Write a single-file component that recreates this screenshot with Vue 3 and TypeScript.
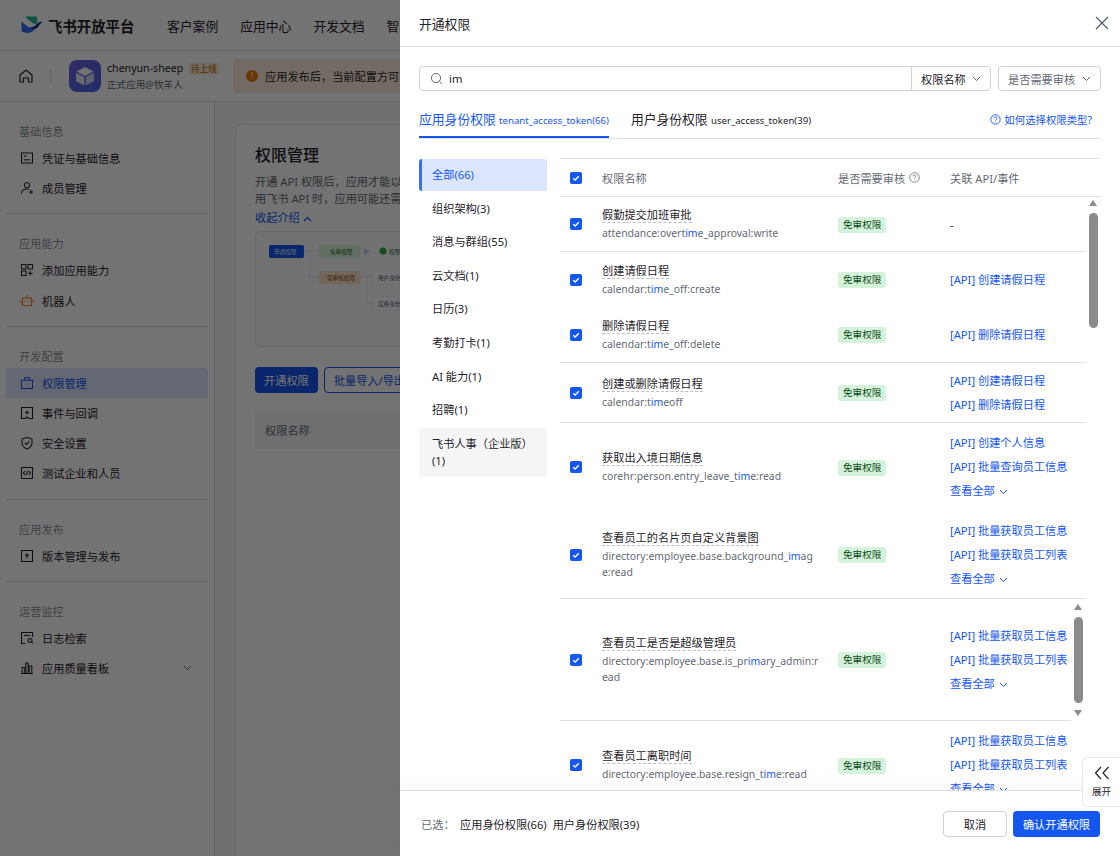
<template>
  <div class="page">
    <header class="topbar">
      <div class="logo">
        <svg width="22" height="18" viewBox="0 0 22 18">
          <path d="M4 0.5H15.5C16.5 3 16.8 5.5 15 8.5C12 7 7.5 4.5 4 0.5Z" fill="#19b6a3" />
          <path d="M0.5 5.5C4 9 8.5 12.5 14 13.5C11 16.5 7 17.5 4 16.5C2 16 1 15.5 0.5 15Z" fill="#2f6bf2" />
          <path d="M8 11C11 12 14 10.5 16 8C17.5 6.3 19.5 5.5 21.5 6C19.5 7 18.5 9 17 11C15 13.5 11.5 13.5 8 11Z" fill="#0e2f8f" />
        </svg>
        <span>飞书开放平台</span>
      </div>
      <nav class="topnav">
        <span v-for="n in navItems" :key="n">{{ n }}</span>
      </nav>
    </header>

    <div class="appbar">
      <svg class="home" width="16" height="16" viewBox="0 0 16 16" fill="none" stroke="#1f2329" stroke-width="1.2">
        <path d="M2 7L8 2L14 7V14H10.5V10H5.5V14H2Z" stroke-linejoin="round" />
      </svg>
      <i class="appbar-sep"></i>
      <div class="app-icon">
        <svg width="22" height="22" viewBox="0 0 22 22">
          <path d="M11 2L19.5 6.5L11 11L2.5 6.5Z" fill="#ffffff" />
          <path d="M2 7.7L10.3 12V20.5L2 16.2Z" fill="#e6e9fb" />
          <path d="M20 7.7L11.7 12V20.5L20 16.2Z" fill="#cfd5f7" />
        </svg>
      </div>
      <div class="app-info">
        <div class="app-name">chenyun-sheep <em>待上线</em></div>
        <div class="app-org">正式应用@牧羊人</div>
      </div>
      <div class="notice">
        <i class="notice-dot">!</i>
        <span>应用发布后，当前配置方可生效，请及时创建版本并申请发布</span>
      </div>
    </div>

    <div class="main">
      <aside class="sidebar">
        <section v-for="(g, gi) in sideGroups" :key="g.title" class="side-group" :class="{ last: gi === sideGroups.length - 1 }">
          <div class="side-title">{{ g.title }}</div>
          <div v-for="it in g.items" :key="it.label" class="side-item" :class="{ active: it.active }">
            <svg width="14" height="14" viewBox="0 0 14 14" fill="none" :stroke="it.color || (it.active ? '#1456f0' : '#1f2329')" stroke-width="1.05">
              <path v-for="d in icons[it.icon]" :key="d" :d="d" />
            </svg>
            <span>{{ it.label }}</span>
            <svg v-if="it.more" class="side-caret" width="9" height="6" viewBox="0 0 9 6" fill="none" stroke="#646a73">
              <path d="M1 1L4.5 4.5L8 1" />
            </svg>
          </div>
        </section>
      </aside>

      <div class="content">
        <div class="card">
          <h2>权限管理</h2>
          <p>开通 API 权限后，应用才能以自身身份或用户身份调用相应的接口</p>
          <p>用飞书 API 时，应用可能还需要额外申请数据权限</p>
          <div class="collapse">收起介绍
            <svg width="9" height="6" viewBox="0 0 9 6" fill="none" stroke="#1456f0" stroke-width="1.2"><path d="M1 5L4.5 1.5L8 5" /></svg>
          </div>
          <div class="diagram">
            <svg width="400" height="116" viewBox="0 0 400 116" fill="none" font-size="5.6" font-family="'Noto Sans CJK SC', sans-serif">
              <path d="M47 19H63M54 19V45H63M104 45H117M111 45V71H117" stroke="#c8cbd0" stroke-width="0.7" stroke-dasharray="1.5 1" />
              <rect x="13" y="13" width="35" height="13" rx="2" fill="#1456f0" />
              <text x="18" y="22" fill="#dfe8ff">申通权限</text>
              <rect x="63" y="13" width="41" height="13" rx="2" fill="#d9f3d9" />
              <text x="74" y="22" fill="#2f6b2f">免审权限</text>
              <path d="M108 16L114 19.5L108 23Z" fill="#bcd0fb" />
              <circle cx="127" cy="19" r="3.5" fill="#32a645" />
              <text x="133" y="22" fill="#2f6b2f">权限</text>
              <rect x="63" y="39" width="41" height="13" rx="2" fill="#fde3cb" />
              <text x="71" y="48" fill="#8a4a10">需审核权限</text>
              <rect x="117" y="39" width="40" height="13" rx="2" fill="#fff" stroke="#dee0e3" stroke-dasharray="1.5 1" stroke-width="0.7" />
              <text x="122" y="48" fill="#4e5969">用户身份</text>
              <rect x="117" y="65" width="40" height="13" rx="2" fill="#fff" stroke="#dee0e3" stroke-dasharray="1.5 1" stroke-width="0.7" />
              <text x="122" y="74" fill="#4e5969">应用身份</text>
            </svg>
          </div>
          <div class="card-actions">
            <button class="btn-solid">开通权限</button>
            <button class="btn-line">批量导入/导出权限</button>
          </div>
          <div class="card-thead">权限名称</div>
        </div>
      </div>
    </div>

    <div class="mask"></div>

    <div class="drawer">
      <div class="drawer-head">
        <span>开通权限</span>
        <svg width="14" height="14" viewBox="0 0 14 14" fill="none" stroke="#4e5969" stroke-width="1.1"><path d="M1 1L13 13M13 1L1 13" /></svg>
      </div>

      <div class="drawer-body">
        <div class="filters">
          <div class="search">
            <svg width="13" height="13" viewBox="0 0 13 13" fill="none" stroke="#646a73" stroke-width="1">
              <circle cx="6" cy="6" r="4.6" /><path d="M9.5 9.5L11.8 11.8" />
            </svg>
            <span class="search-text">im</span>
            <div class="search-type">权限名称
              <svg width="9" height="6" viewBox="0 0 9 6" fill="none" stroke="#646a73"><path d="M1 1L4.5 4.5L8 1" /></svg>
            </div>
          </div>
          <div class="audit-select">是否需要审核
            <svg width="9" height="6" viewBox="0 0 9 6" fill="none" stroke="#646a73"><path d="M1 1L4.5 4.5L8 1" /></svg>
          </div>
        </div>

        <div class="tabs">
          <div class="tab on">应用身份权限 <small>tenant_access_token(66)</small></div>
          <div class="tab">用户身份权限 <small>user_access_token(39)</small></div>
          <div class="tab-help">
            <svg width="11" height="11" viewBox="0 0 11 11" fill="none" stroke="#1456f0" stroke-width="0.9">
              <circle cx="5.5" cy="5.5" r="4.7" /><path d="M4 4.3C4 2.4 7 2.4 7 4.2C7 5.3 5.5 5.3 5.5 6.6M5.5 7.6V8.4" />
            </svg>
            如何选择权限类型?
          </div>
        </div>

        <div class="columns">
          <div class="cats">
            <div v-for="(c, i) in categories" :key="c" class="cat" :class="{ on: i === 0, hover: i === categories.length - 1 }">{{ c }}</div>
          </div>

          <div class="table">
            <div class="thead grid">
              <span class="check"><svg width="12" height="12" viewBox="0 0 12 12" fill="none" stroke="#fff" stroke-width="1.4"><path d="M3.2 6.2L5.2 8L8.8 4.2" /></svg></span>
              <span>权限名称</span>
              <span class="thead-audit">是否需要审核
                <svg width="11" height="11" viewBox="0 0 11 11" fill="none" stroke="#646a73" stroke-width="0.8">
                  <circle cx="5.5" cy="5.5" r="4.8" /><path d="M4 4.3C4 2.4 7 2.4 7 4.2C7 5.3 5.5 5.3 5.5 6.6M5.5 7.6V8.4" />
                </svg>
              </span>
              <span>关联 API/事件</span>
            </div>

            <div class="tbody">
              <div
                v-for="r in rows"
                :key="r.title"
                class="row grid"
                :class="{ line: r.line, narrow: r.narrow }"
                :style="{ height: r.h + 'px' }"
              >
                <span class="check"><svg width="12" height="12" viewBox="0 0 12 12" fill="none" stroke="#fff" stroke-width="1.4"><path d="M3.2 6.2L5.2 8L8.8 4.2" /></svg></span>
                <div class="perm">
                  <div class="perm-title"><span>{{ r.title }}</span></div>
                  <div class="perm-scope">{{ r.scope[0] }}<b>im</b>{{ r.scope[1] }}</div>
                </div>
                <div><span class="tag">免审权限</span></div>
                <div class="apis">
                  <template v-if="r.apis.length">
                    <a v-for="a in r.apis" :key="a">{{ a }}</a>
                    <a v-if="r.all" class="see-all">查看全部
                      <svg width="9" height="6" viewBox="0 0 9 6" fill="none" stroke="#1456f0"><path d="M1 1L4.5 4.5L8 1" /></svg>
                    </a>
                  </template>
                  <span v-else>-</span>
                </div>
              </div>

              <div class="bar bar-a"><i class="up"></i><i class="thumb"></i></div>
              <div class="bar bar-b"><i class="up"></i><i class="thumb"></i><i class="down"></i></div>
            </div>
          </div>
        </div>
      </div>

      <div class="drawer-foot">
        <span class="foot-label">已选：</span>
        <span class="foot-sel">应用身份权限(66)</span>
        <span class="foot-sel second">用户身份权限(39)</span>
        <button class="btn-cancel">取消</button>
        <button class="btn-ok">确认开通权限</button>
      </div>

      <div class="expand">
        <svg width="16" height="14" viewBox="0 0 16 14" fill="none" stroke="#1f2329" stroke-width="1.2"><path d="M7 1L1.5 7L7 13M14.5 1L9 7L14.5 13" /></svg>
        <span>展开</span>
      </div>
    </div>
  </div>
</template>

<script setup lang="ts">
interface SideItem {
  label: string;
  icon: string;
  active?: boolean;
  more?: boolean;
  color?: string;
}

interface PermRow {
  title: string;
  scope: [string, string];
  apis: string[];
  all?: boolean;
  line?: boolean;
  narrow?: boolean;
  h: number;
}

const navItems = ['客户案例', '应用中心', '开发文档', '智能助手'];

const icons: Record<string, string[]> = {
  card: ['M1.5 2H12.5V12H1.5Z', 'M3.8 5H6.5', 'M3.8 8.8H10.2'],
  member: ['M7 1.5A2.6 2.6 0 1 1 6.99 1.5', 'M1.5 12.5C1.5 9.5 3.8 8 7 8C8 8 8.8 8.1 9.4 8.4', 'M11 9V13M9 11H13'],
  blocks: ['M1.5 1.5H6V6H1.5Z', 'M8 1.5H12.5V6H8Z', 'M1.5 8H6V12.5H1.5Z', 'M10.2 8V12.5M8 10.2H12.5'],
  robot: ['M2.5 4H11.5V11.5H2.5Z', 'M7 1.5V4', 'M1 6.5V9M13 6.5V9', 'M5 7V8M9 7V8'],
  lock: ['M1.5 4.2H12.5V12.5H1.5Z', 'M4.8 4.2V1.5H9.2V4.2', 'M7 7.6V8.6'],
  event: ['M1.5 1.5H12.5V12.5H8.8L7 11L5.2 12.5H1.5Z', 'M7 4.4V8.4M5 6.4H9'],
  shield: ['M7 1.2L12 3V7C12 10 9.5 12 7 13C4.5 12 2 10 2 7V3Z', 'M4.8 6.8L6.5 8.4L9.3 5.4'],
  code: ['M1.5 1.5H12.5V12.5H1.5Z', 'M5 5.2L3.4 7L5 8.8M9 5.2L10.6 7L9 8.8M7.6 5L6.4 9'],
  upload: ['M1.5 1.5H12.5V12.5H1.5Z', 'M7 9.5V5M5 7L7 5L9 7'],
  log: ['M5.5 12.5H1.5V1.5H12.5V6', 'M3.8 4.4H10.2', 'M10 7.5A2 2 0 1 1 9.99 7.5', 'M11.4 10.9L13 12.5'],
  chart: ['M1 12.5H13', 'M2.2 12.5V6.5H4.8V12.5', 'M5.8 12.5V2H8.2V12.5', 'M9.2 12.5V5H11.8V12.5'],
};

const sideGroups: { title: string; items: SideItem[] }[] = [
  { title: '基础信息', items: [
    { label: '凭证与基础信息', icon: 'card' },
    { label: '成员管理', icon: 'member' },
  ] },
  { title: '应用能力', items: [
    { label: '添加应用能力', icon: 'blocks' },
    { label: '机器人', icon: 'robot', color: '#ed7b12' },
  ] },
  { title: '开发配置', items: [
    { label: '权限管理', icon: 'lock', active: true },
    { label: '事件与回调', icon: 'event' },
    { label: '安全设置', icon: 'shield' },
    { label: '测试企业和人员', icon: 'code' },
  ] },
  { title: '应用发布', items: [
    { label: '版本管理与发布', icon: 'upload' },
  ] },
  { title: '运营监控', items: [
    { label: '日志检索', icon: 'log' },
    { label: '应用质量看板', icon: 'chart', more: true },
  ] },
];

const categories = [
  '全部(66)',
  '组织架构(3)',
  '消息与群组(55)',
  '云文档(1)',
  '日历(3)',
  '考勤打卡(1)',
  'AI 能力(1)',
  '招聘(1)',
  '飞书人事（企业版）(1)',
];

const rows: PermRow[] = [
  { title: '假勤提交加班审批', scope: ['attendance:overt', 'e_approval:write'], apis: [], line: true, h: 55 },
  { title: '创建请假日程', scope: ['calendar:t', 'e_off:create'], apis: ['[API] 创建请假日程'], h: 55 },
  { title: '删除请假日程', scope: ['calendar:t', 'e_off:delete'], apis: ['[API] 删除请假日程'], line: true, h: 56 },
  { title: '创建或删除请假日程', scope: ['calendar:t', 'eoff'], apis: ['[API] 创建请假日程', '[API] 删除请假日程'], line: true, h: 60 },
  { title: '获取出入境日期信息', scope: ['corehr:person.entry_leave_t', 'e:read'], apis: ['[API] 创建个人信息', '[API] 批量查询员工信息'], all: true, h: 88 },
  { title: '查看员工的名片页自定义背景图', scope: ['directory:employee.base.background_', 'age:read'], apis: ['[API] 批量获取员工信息', '[API] 批量获取员工列表'], all: true, line: true, h: 88 },
  { title: '查看员工是否是超级管理员', scope: ['directory:employee.base.is_pr', 'ary_admin:read'], apis: ['[API] 批量获取员工信息', '[API] 批量获取员工列表'], all: true, line: true, narrow: true, h: 122 },
  { title: '查看员工离职时间', scope: ['directory:employee.base.resign_t', 'e:read'], apis: ['[API] 批量获取员工信息', '[API] 批量获取员工列表'], all: true, h: 88 },
];
</script>

<style>
html, body {
  margin: 0;
  overflow: hidden;
}
</style>

<style scoped>
.page {
  position: relative;
  width: 1120px;
  height: 856px;
  overflow: hidden;
  background: #fff;
  color: #1f2329;
  font-family: "Noto Sans", "Noto Sans CJK SC", sans-serif;
  font-size: 11.2px;
}

.topbar {
  height: 50px;
  display: flex;
  align-items: center;
  padding-left: 21px;
  border-bottom: 1px solid #dee0e3;
  box-sizing: content-box;
}
.logo {
  display: flex;
  align-items: center;
  gap: 5px;
  width: 146px;
  font-size: 14.4px;
  font-weight: 700;
}
.topnav {
  display: flex;
  gap: 22px;
  font-size: 12.8px;
}

.appbar {
  height: 50px;
  display: flex;
  align-items: center;
  padding-left: 18px;
  border-bottom: 1px solid #dee0e3;
}
.appbar-sep {
  width: 1px;
  height: 13px;
  margin: 0 18px 0 16px;
  background: #dee0e3;
}
.app-icon {
  width: 32px;
  height: 32px;
  border-radius: 8px;
  background: linear-gradient(135deg, #6f63e8, #4a62e0);
  display: flex;
  align-items: center;
  justify-content: center;
}
.app-info {
  margin-left: 6px;
  width: 126px;
}
.app-name {
  font-size: 10.6px;
  line-height: 16px;
  white-space: nowrap;
}
.app-name em {
  font-style: normal;
  font-size: 8.6px;
  padding: 0 2px;
  margin-left: 3px;
  color: #c2660a;
  background: #fde8d4;
  border-radius: 2px;
}
.app-org {
  font-size: 9.6px;
  line-height: 16px;
  color: #646a73;
}
.notice {
  height: 34px;
  flex: 1;
  display: flex;
  align-items: center;
  padding-left: 13px;
  white-space: nowrap;
  overflow: hidden;
  border-radius: 4px;
  background: #feeddb;
}
.notice-dot {
  width: 12px;
  height: 12px;
  margin-right: 7px;
  border-radius: 50%;
  background: #ed7b12;
  color: #fff;
  font-style: normal;
  font-size: 9px;
  line-height: 12px;
  text-align: center;
}

.main {
  display: flex;
  height: 755px;
}
.sidebar {
  width: 215px;
  padding: 0 6px;
  box-sizing: border-box;
  border-right: 1px solid #dee0e3;
  flex: none;
}
.side-group {
  margin: 0 0 0 0;
  padding: 19px 0 10px;
  border-bottom: 1px solid #dee0e3;
  box-shadow: none;
}
.side-group.last {
  border-bottom: 0;
}
.side-title {
  padding-left: 13px;
  line-height: 22px;
  color: #8f959e;
}
.side-item {
  height: 30.2px;
  display: flex;
  align-items: center;
  gap: 8px;
  padding: 0 6px 0 14px;
  border-radius: 3px;
}
.side-item.active {
  background: #dbe6fd;
  color: #1456f0;
}
.side-caret {
  margin-left: auto;
  margin-right: 10px;
}

.content {
  flex: 1;
  padding: 22px 0 0 20px;
  background: #f7f8fa;
}
.card {
  height: 760px;
  padding: 20px 19px;
  background: #fff;
  border: 1px solid #e4e5e7;
  border-radius: 6px 0 0 0;
  white-space: nowrap;
  overflow: hidden;
}
.card h2 {
  margin: 0;
  font-size: 16px;
  line-height: 20px;
  font-weight: 500;
}
.card p {
  margin: 0;
  color: #646a73;
  line-height: 17px;
}
.card h2 + p {
  margin-top: 8px;
}
.collapse {
  color: #1456f0;
  line-height: 22px;
}
.diagram {
  height: 116px;
  margin-top: 2px;
  border: 1px solid #e4e5e7;
  border-radius: 4px;
  background: #fafbfc;
  box-sizing: border-box;
}
.card-actions {
  display: flex;
  gap: 6px;
  margin-top: 20px;
}
.card-actions button {
  height: 26px;
  padding: 0 9px;
  font: inherit;
  border-radius: 4px;
  white-space: nowrap;
}
.btn-solid {
  background: #1456f0;
  color: #fff;
  border: 0;
}
.btn-line {
  background: #fff;
  color: #1456f0;
  border: 1px solid #1456f0;
}
.card-thead {
  height: 37px;
  margin-top: 19px;
  padding-left: 10px;
  line-height: 37px;
  background: #f5f6f7;
  color: #646a73;
}

.mask {
  position: absolute;
  inset: 0;
  background: rgba(0, 0, 0, 0.55);
}

.drawer {
  position: absolute;
  top: 0;
  left: 400px;
  width: 720px;
  height: 856px;
  display: flex;
  flex-direction: column;
  background: #fff;
}
.drawer-head {
  height: 46px;
  flex: none;
  display: flex;
  align-items: center;
  justify-content: space-between;
  padding: 0 11px 0 19px;
  font-size: 12.8px;
  border-bottom: 1px solid #dee0e3;
  box-sizing: content-box;
}
.drawer-body {
  flex: 1;
  min-height: 0;
  padding: 19px 19px 0;
  overflow: hidden;
}
.filters {
  display: flex;
  gap: 7px;
  height: 25px;
}
.search {
  width: 572px;
  display: flex;
  align-items: center;
  box-sizing: border-box;
  padding-left: 10px;
  border: 1px solid #d0d3d6;
  border-radius: 4px;
}
.search-text {
  margin-left: 6px;
  flex: 1;
}
.search-type {
  width: 79px;
  height: 100%;
  box-sizing: border-box;
  display: flex;
  align-items: center;
  gap: 6px;
  padding-left: 9px;
  border-left: 1px solid #d0d3d6;
}
.audit-select {
  width: 103px;
  box-sizing: border-box;
  display: flex;
  align-items: center;
  gap: 7px;
  padding-left: 9px;
  border: 1px solid #d0d3d6;
  border-radius: 4px;
  color: #646a73;
}
.tabs {
  height: 37px;
  margin-top: 10px;
  display: flex;
  gap: 22px;
  border-bottom: 1px solid #dee0e3;
  box-sizing: content-box;
}
.tab {
  height: 37px;
  line-height: 36px;
  font-size: 12.8px;
  white-space: nowrap;
  box-sizing: border-box;
}
.tab small {
  font-size: 9.6px;
}
.tab.on {
  color: #1456f0;
  border-bottom: 2px solid #1456f0;
}
.tab-help {
  margin-left: auto;
  margin-right: 9px;
  display: flex;
  align-items: center;
  gap: 3px;
  font-size: 10.4px;
  color: #1456f0;
}

.columns {
  display: flex;
  margin-top: 19px;
}
.cats {
  width: 128px;
  flex: none;
  padding-top: 1px;
}
.cat {
  min-height: 32px;
  margin-bottom: 1.6px;
  padding: 7px 13px;
  box-sizing: border-box;
  line-height: 17.6px;
  border-radius: 3px;
}
.cat.on {
  background: #dbe6fd;
  color: #1456f0;
  border-left: 3px solid #3370ff;
  padding-left: 10px;
}
.cat.hover {
  background: #f5f5f5;
}

.table {
  margin-left: 13px;
  width: 541px;
  border-top: 1px solid #dee0e3;
  flex: none;
}
.grid {
  display: grid;
  grid-template-columns: 42px 236px 112px 1fr;
  align-items: center;
}
.thead {
  height: 37px;
  color: #646a73;
  border-bottom: 1px solid #dee0e3;
  box-sizing: content-box;
}
.thead-audit {
  display: flex;
  align-items: center;
  gap: 4px;
}
.check {
  width: 12px;
  height: 12px;
  margin-left: 10px;
  display: block;
  background: #1456f0;
  border-radius: 2px;
}
.check svg {
  display: block;
}
.tbody {
  position: relative;
  height: 594px;
  overflow: hidden;
}
.row {
  box-sizing: border-box;
  margin-right: 15px;
}
.row.line {
  border-bottom: 1px solid #dee0e3;
}
.row.narrow {
  margin-right: 30px;
}
.perm {
  padding-right: 18px;
}
.perm-title {
  line-height: 16px;
}
.perm-title span {
  border-bottom: 1px dashed #bbbfc4;
}
.perm-scope {
  margin-top: 2px;
  line-height: 16px;
  font-size: 10.4px;
  color: #646a73;
  word-break: break-all;
}
.perm-scope b {
  font-weight: 400;
  color: #1456f0;
}
.tag {
  display: inline-block;
  padding: 0 5px;
  height: 16px;
  line-height: 16px;
  font-size: 9.6px;
  color: #0d4a1a;
  background: #d5f3da;
  border-radius: 3px;
}
.apis a {
  display: block;
  line-height: 17.6px;
  color: #1456f0;
}
.apis a + a {
  margin-top: 6.4px;
}
.see-all svg {
  margin-left: 1px;
}

.bar {
  position: absolute;
  width: 9px;
}
.bar i {
  display: block;
}
.bar-a {
  top: 3px;
  right: 3px;
}
.bar-b {
  top: 407px;
  right: 18px;
}
.bar .up,
.bar .down {
  width: 0;
  height: 0;
  border-left: 4.5px solid transparent;
  border-right: 4.5px solid transparent;
}
.bar .up {
  border-bottom: 6px solid #8b8b8b;
}
.bar .down {
  margin-top: 7px;
  border-top: 6px solid #8b8b8b;
}
.bar .thumb {
  margin-top: 7px;
  border-radius: 5px;
  background: #8b8b8b;
}
.bar-a .thumb {
  height: 115px;
}
.bar-b .thumb {
  height: 86px;
}

.drawer-foot {
  height: 65px;
  flex: none;
  display: flex;
  align-items: center;
  padding: 0 20px 0 21px;
  border-top: 1px solid #dee0e3;
  background: #fff;
  position: relative;
  box-shadow: 0 -8px 14px rgba(0, 0, 0, 0.03);
}
.foot-label {
  width: 39px;
  color: #646a73;
}
.foot-sel.second {
  margin-left: 6px;
}
.drawer-foot button {
  height: 26px;
  font: inherit;
  border-radius: 4px;
}
.btn-cancel {
  width: 64px;
  margin-left: auto;
  background: #fff;
  border: 1px solid #d0d3d6;
  color: #1f2329;
}
.btn-ok {
  width: 87px;
  margin-left: 6px;
  background: #1456f0;
  border: 0;
  color: #fff;
}
.expand {
  position: absolute;
  right: 0;
  top: 757px;
  width: 38px;
  height: 50px;
  box-sizing: border-box;
  padding-top: 8px;
  display: flex;
  flex-direction: column;
  align-items: center;
  gap: 4px;
  font-size: 9.6px;
  background: #fff;
  border: 1px solid #e6e7e9;
  border-right: 0;
  border-radius: 6px 0 0 6px;
}
</style>
